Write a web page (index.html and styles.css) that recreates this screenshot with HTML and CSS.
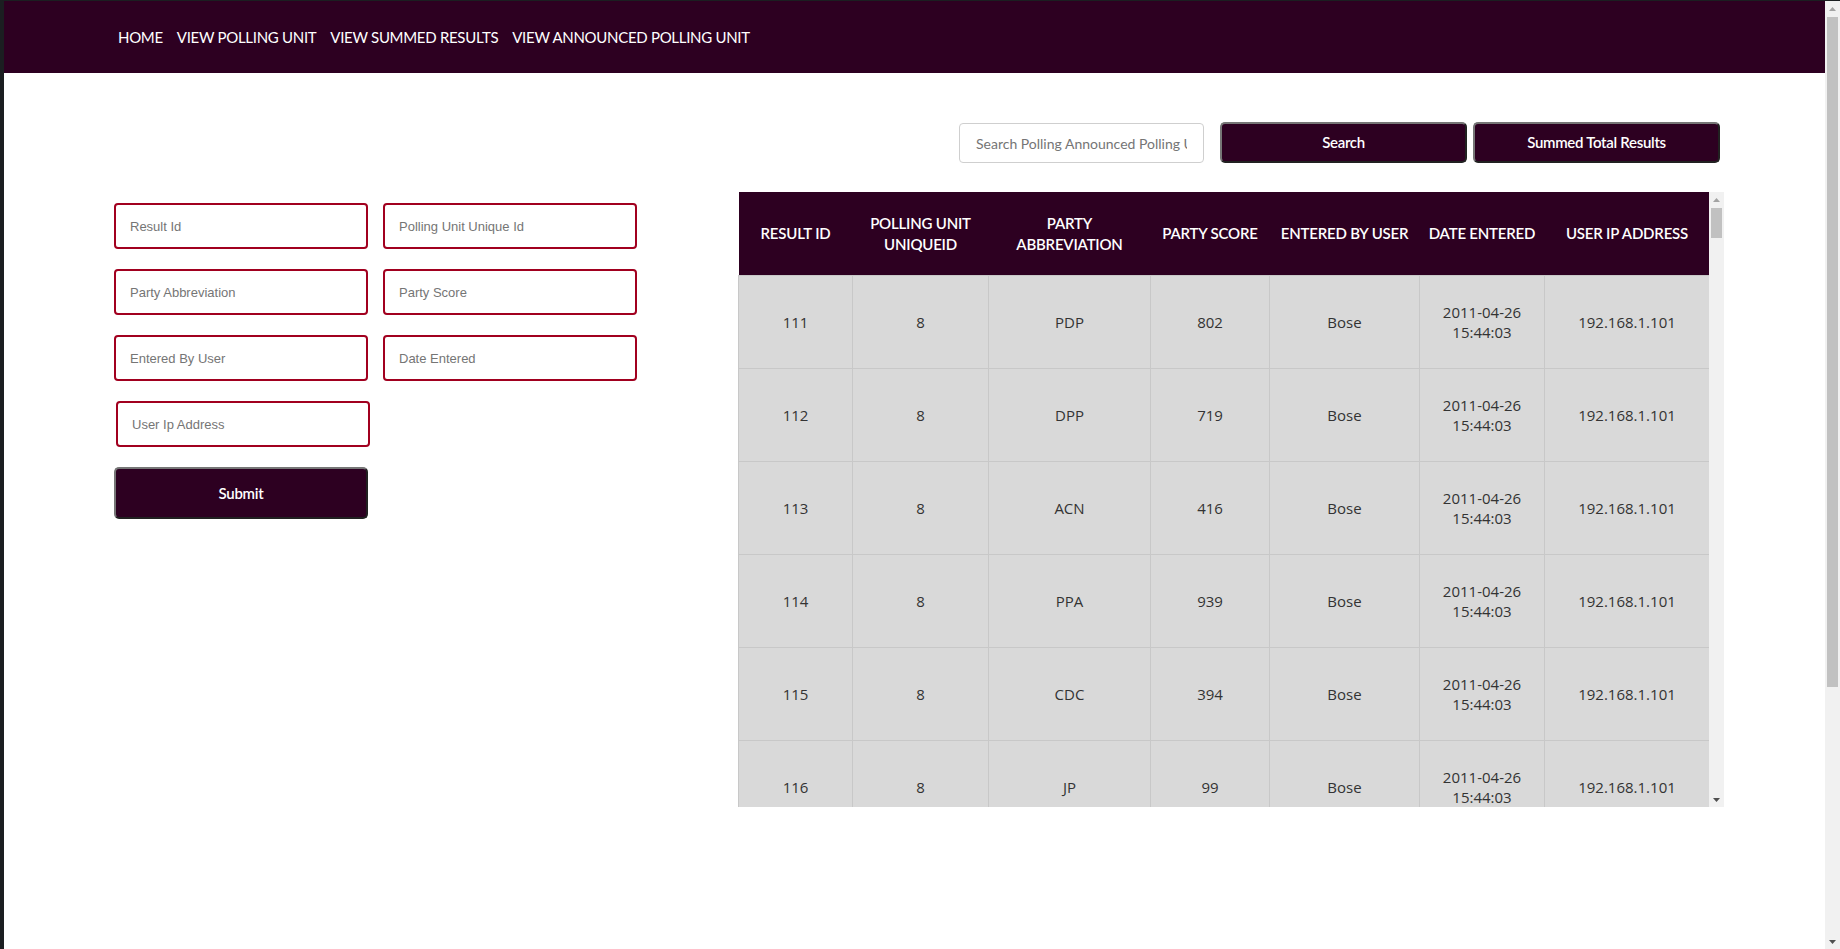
FILE: index.html
```html
<!DOCTYPE html>
<html lang="en">
<head>
<meta charset="utf-8">
<title>Announced Polling Unit Results</title>
<link rel="stylesheet" href="styles.css">
</head>
<body>
<div class="page">
  <nav class="topnav">
    <a href="#">HOME</a>
    <a href="#">VIEW POLLING UNIT</a>
    <a href="#">VIEW SUMMED RESULTS</a>
    <a href="#">VIEW ANNOUNCED POLLING UNIT</a>
  </nav>
  <main class="content">
    <div class="toolbar">
      <input class="search" type="text" placeholder="Search Polling Announced Polling Unit">
      <button class="btn btn-tool" type="button">Search</button>
      <button class="btn btn-tool" type="button">Summed Total Results</button>
    </div>
    <div class="layout">
      <form class="entry-form">
        <div class="field-grid">
          <input class="field" type="text" placeholder="Result Id">
          <input class="field" type="text" placeholder="Polling Unit Unique Id">
          <input class="field" type="text" placeholder="Party Abbreviation">
          <input class="field" type="text" placeholder="Party Score">
          <input class="field" type="text" placeholder="Entered By User">
          <input class="field" type="text" placeholder="Date Entered">
          <input class="field field-offset" type="text" placeholder="User Ip Address">
        </div>
        <button class="btn btn-submit" type="button">Submit</button>
      </form>
      <div class="table-box">
        <div class="table-viewport">
          <table class="results">
            <colgroup>
              <col class="c-id"><col class="c-pu"><col class="c-party"><col class="c-score"><col class="c-user"><col class="c-date"><col class="c-ip">
            </colgroup>
            <thead>
              <tr>
                <th>Result Id</th>
                <th>Polling Unit Uniqueid</th>
                <th>Party Abbreviation</th>
                <th>Party Score</th>
                <th>Entered By User</th>
                <th>Date Entered</th>
                <th>User Ip Address</th>
              </tr>
            </thead>
            <tbody>
              <tr><td>111</td><td>8</td><td>PDP</td><td>802</td><td>Bose</td><td>2011-04-26 15:44:03</td><td>192.168.1.101</td></tr>
              <tr><td>112</td><td>8</td><td>DPP</td><td>719</td><td>Bose</td><td>2011-04-26 15:44:03</td><td>192.168.1.101</td></tr>
              <tr><td>113</td><td>8</td><td>ACN</td><td>416</td><td>Bose</td><td>2011-04-26 15:44:03</td><td>192.168.1.101</td></tr>
              <tr><td>114</td><td>8</td><td>PPA</td><td>939</td><td>Bose</td><td>2011-04-26 15:44:03</td><td>192.168.1.101</td></tr>
              <tr><td>115</td><td>8</td><td>CDC</td><td>394</td><td>Bose</td><td>2011-04-26 15:44:03</td><td>192.168.1.101</td></tr>
              <tr><td>116</td><td>8</td><td>JP</td><td>99</td><td>Bose</td><td>2011-04-26 15:44:03</td><td>192.168.1.101</td></tr>
            </tbody>
          </table>
        </div>
        <div class="sb">
          <div class="sb-btn"><svg width="7" height="4" viewBox="0 0 7 4"><polygon points="0,4 7,4 3.5,0" class="arrow-off"/></svg></div>
          <div class="sb-track"><div class="sb-thumb thumb-table"></div></div>
          <div class="sb-btn"><svg width="7" height="4" viewBox="0 0 7 4"><polygon points="0,0 7,0 3.5,4" class="arrow-on"/></svg></div>
        </div>
      </div>
    </div>
  </main>
</div>
<div class="sb sb-page">
  <div class="sb-btn"><svg width="7" height="4" viewBox="0 0 7 4"><polygon points="0,4 7,4 3.5,0" class="arrow-off"/></svg></div>
  <div class="sb-track"><div class="sb-thumb thumb-page"></div></div>
  <div class="sb-btn"><svg width="7" height="4" viewBox="0 0 7 4"><polygon points="0,0 7,0 3.5,4" class="arrow-on"/></svg></div>
</div>
</body>
</html>
```

FILE: styles.css
```css
html, body {
  margin: 0;
}

body {
  box-sizing: border-box;
  height: 100vh;
  overflow: hidden;
  display: flex;
  background: #1b1e21;
  padding: 1px 0 0 4px;
  font-family: Lato, "Open Sans", sans-serif;
}

.page {
  flex: 1;
  background: #ffffff;
}

/* fake classic scrollbars */
.sb {
  width: 15px;
  flex: 0 0 15px;
  background: #f1f1f1;
  display: flex;
  flex-direction: column;
}

.sb-btn {
  height: 15px;
  flex: 0 0 15px;
  display: flex;
  align-items: center;
  justify-content: center;
}

.sb-track {
  flex: 1;
  padding: 1px 2px;
}

.sb-thumb {
  background: #c1c1c1;
}

.thumb-page {
  height: 670px;
}

.thumb-table {
  height: 30px;
}

.arrow-off {
  fill: #a3a3a3;
}

.arrow-on {
  fill: #505050;
}

.topnav {
  background: #2d0021;
  height: 72px;
  display: flex;
  align-items: center;
  gap: 14px;
  padding-left: 114px;
}

.topnav a {
  color: #ffffff;
  text-decoration: none;
  font-size: 15px;
  letter-spacing: -0.3px;
  line-height: 20px;
}

.content {
  padding: 48px 101px 0 110px;
}

.toolbar {
  display: flex;
  justify-content: flex-end;
  align-items: center;
  height: 42px;
  margin-bottom: 29px;
  padding-right: 4px;
}

.search {
  box-sizing: border-box;
  width: 245px;
  height: 40px;
  margin-right: 16px;
  margin-top: 2px;
  border: 1px solid #cfcfcf;
  border-radius: 4px;
  padding: 0 16px;
  font-family: Lato, "Open Sans", sans-serif;
  font-size: 14px;
  color: #333;
}

.search::placeholder {
  color: #757575;
}

.btn {
  box-sizing: border-box;
  background: #2d0021;
  color: #ffffff;
  border: 2px outset #767676;
  border-radius: 5px;
  font-family: Lato, "Open Sans", sans-serif;
  font-size: 15px;
  letter-spacing: -0.3px;
  font-weight: 600;
  cursor: pointer;
}

.btn-tool {
  width: 247px;
  height: 41px;
}

.btn-tool + .btn-tool {
  margin-left: 6px;
}

.layout {
  display: grid;
  grid-template-columns: 523px 986px;
  justify-content: space-between;
  align-items: start;
}

.entry-form {
  padding-top: 11px;
  display: flex;
  flex-direction: column;
  gap: 20px;
}

.field-grid {
  display: grid;
  grid-template-columns: 254px 254px;
  column-gap: 15px;
  row-gap: 20px;
}

.field {
  box-sizing: border-box;
  width: 254px;
  height: 46px;
  border: 2px solid #a1001f;
  border-radius: 4px;
  padding: 0 14px;
  font-family: "Liberation Sans", Arial, sans-serif;
  font-size: 13px;
  color: #333;
}

.field::placeholder {
  color: #757575;
}

.field-offset {
  margin-left: 2px;
}

.btn-submit {
  width: 254px;
  height: 52px;
}

.table-box {
  display: flex;
  width: 986px;
  height: 615px;
}

.table-viewport {
  width: 971px;
  flex: 0 0 971px;
  overflow: hidden;
}

.results {
  width: 971px;
  border-collapse: collapse;
  table-layout: fixed;
}

.c-id { width: 114px; }
.c-pu { width: 136px; }
.c-party { width: 162px; }
.c-score { width: 119px; }
.c-user { width: 150px; }
.c-date { width: 125px; }
.c-ip { width: 165px; }

.results th {
  background: #2d0021;
  color: #ffffff;
  height: 83px;
  padding: 0 4px;
  font-family: Lato, "Open Sans", sans-serif;
  font-size: 15px;
  letter-spacing: -0.2px;
  font-weight: 600;
  line-height: 21px;
  text-transform: uppercase;
  text-align: center;
}

.results td {
  background: #d9d9d9;
  border: 1px solid #c8c8c8;
  height: 92px;
  padding: 0 8px;
  color: #333333;
  font-family: "Open Sans", sans-serif;
  font-size: 15px;
  line-height: 20px;
  text-align: center;
}
```
